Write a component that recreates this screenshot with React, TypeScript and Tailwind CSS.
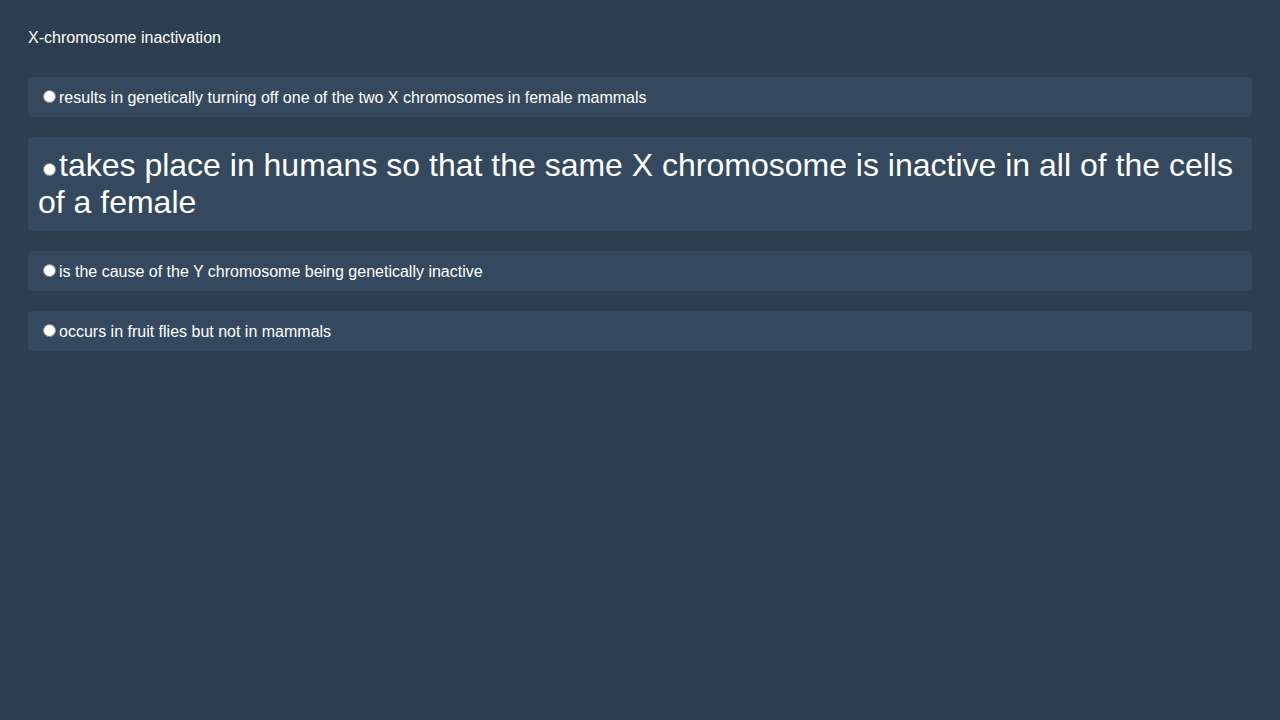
const options = [
  { text: "results in genetically turning off one of the two X chromosomes in female mammals", big: false },
  { text: "takes place in humans so that the same X chromosome is inactive in all of the cells of a female", big: true },
  { text: "is the cause of the Y chromosome being genetically inactive", big: false },
  { text: "occurs in fruit flies but not in mammals", big: false },
];

export default function App() {
  return (
    <div
      className="min-h-[720px] w-full bg-[#2c3e50] p-[28px] text-white"
      style={{ fontFamily: '"Liberation Sans", Arial, sans-serif' }}
    >
      <div className="text-base leading-[18px] mt-[1px] mb-[30px]">X-chromosome inactivation</div>
      <div className="flex flex-col gap-[20px]">
        {options.map((o, i) => (
          <label
            key={i}
            className={
              "block rounded-[4px] bg-[#34495e] p-[10px] " +
              (o.big ? "text-[32px] leading-[37px]" : "text-base leading-[19px]")
            }
          >
            <input type="radio" name="q" className="ml-[5px] mr-[3px] mt-[3px] align-baseline" />
            {o.text}
          </label>
        ))}
      </div>
    </div>
  );
}
